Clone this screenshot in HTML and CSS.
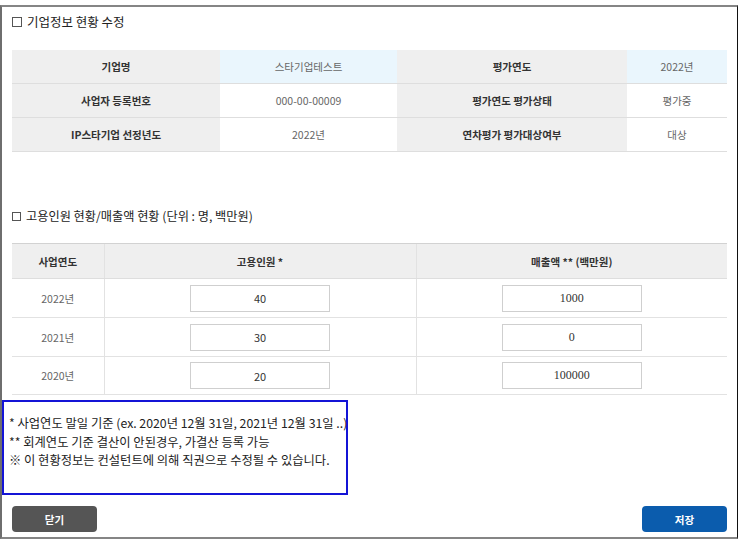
FILE: index.html
```html
<!DOCTYPE html>
<html>
<head>
    <title>기업정보 현황 수정</title>
    <link rel="stylesheet" href="styles.css">
</head>
<body>
    <div id="popup">
        <div class="sec-title first"><span class="chk"></span>기업정보 현황 수정</div>
        <table class="info">
            <colgroup>
                <col style="width:208px">
                <col style="width:177px">
                <col style="width:230px">
                <col style="width:100px">
            </colgroup>
            <tr class="hl">
                <th>기업명</th>
                <td>스타기업테스트</td>
                <th>평가연도</th>
                <td>2022년</td>
            </tr>
            <tr>
                <th>사업자 등록번호</th>
                <td>000-00-00009</td>
                <th>평가연도 평가상태</th>
                <td>평가중</td>
            </tr>
            <tr>
                <th>IP스타기업 선정년도</th>
                <td>2022년</td>
                <th>연차평가 평가대상여부</th>
                <td>대상</td>
            </tr>
        </table>

        <div class="sec-title second"><span class="chk small"></span>고용인원 현황/매출액 현황 (단위 : 명, 백만원)</div>
        <table class="stats">
            <colgroup>
                <col style="width:92px">
                <col style="width:312px">
                <col style="width:311px">
            </colgroup>
            <tr>
                <th>사업연도</th>
                <th>고용인원 *</th>
                <th>매출액 ** (백만원)</th>
            </tr>
            <tr>
                <td>2022년</td>
                <td><input class="num" type="text" value="40"></td>
                <td><input class="num serif" type="text" value="1000"></td>
            </tr>
            <tr>
                <td>2021년</td>
                <td><input class="num" type="text" value="30"></td>
                <td><input class="num serif" type="text" value="0"></td>
            </tr>
            <tr class="last">
                <td>2020년</td>
                <td><input class="num" type="text" value="20"></td>
                <td><input class="num serif" type="text" value="100000"></td>
            </tr>
        </table>

        <div id="notes">
            <p>* 사업연도 말일 기준 (ex. 2020년 12월 31일, 2021년 12월 31일 ..)</p>
            <p>** 회계연도 기준 결산이 안된경우, 가결산 등록 가능</p>
            <p>※ 이 현황정보는 컨설턴트에 의해 직권으로 수정될 수 있습니다.</p>
        </div>

        <div class="buttons">
            <button class="btn close">닫기</button>
            <button class="btn save">저장</button>
        </div>
    </div>
</body>
</html>
```

FILE: styles.css
```css
html, body{
    margin:0;
    padding:0;
    background:#fff;
}

body{
    font-family:"Noto Sans CJK KR", "Noto Sans", sans-serif;
    color:#333;
}

#popup{
    box-sizing:border-box;
    width:738px;
    height:534px;
    margin-top:5px;
    border-top:2px solid #858585;
    border-left:2px solid #6e6e6e;
    border-right:1px solid #111;
    border-bottom:2px solid #858585;
}

.sec-title{
    font-size:12.5px;
    line-height:16px;
    color:#222;
    padding-left:10px;
    display:flex;
    align-items:center;
}

.sec-title.first{
    padding-top:7px;
    margin-bottom:20px;
}

.sec-title.second{
    margin-top:56px;
    margin-bottom:19px;
    font-size:12.2px;
}

.chk{
    display:inline-block;
    box-sizing:border-box;
    width:10px;
    height:10px;
    border:1px solid #555;
    margin-right:5px;
}

.chk.small{
    width:9px;
    height:9px;
}

table{
    border-collapse:collapse;
    table-layout:fixed;
    width:715px;
    margin-left:10px;
    font-size:10.5px;
}

.info th, .info td{
    height:33px;
    padding:0;
    text-align:center;
    border-bottom:1px solid #dedede;
}

.info th{
    background:#efefef;
    font-weight:bold;
    color:#333;
}

.info td{
    color:#666;
}

.info tr.hl td{
    background:#eaf6fd;
}

.stats th{
    height:34px;
    padding:0;
    background:#efefef;
    border-top:1px solid #d2d2d2;
    border-bottom:1px solid #dedede;
    font-weight:bold;
    color:#333;
}

.stats td{
    height:38px;
    padding:0;
    text-align:center;
    color:#666;
    border-bottom:1px solid #e2e2e2;
}

.stats tr.last td{
    height:37px;
}

.stats th + th, .stats td + td{
    border-left:1px solid #e2e2e2;
}

.num{
    box-sizing:border-box;
    width:140px;
    height:27px;
    border:1px solid #cfcfcf;
    text-align:center;
    font-family:"Noto Sans CJK KR", sans-serif;
    font-size:11px;
    color:#333;
    outline:none;
}

.num.serif{
    font-family:"Liberation Serif", serif;
    font-size:12px;
}

#notes{
    box-sizing:border-box;
    width:346px;
    height:95px;
    margin-top:5px;
    border:2px solid #1414d6;
    padding:12px 0 0 5px;
}

#notes p{
    margin:0;
    font-size:12.3px;
    line-height:18.5px;
    color:#222;
    white-space:nowrap;
}

.buttons{
    display:flex;
    justify-content:space-between;
    padding:0 10px;
    margin-top:11px;
}

.btn{
    width:85px;
    height:26px;
    border:none;
    border-radius:4px;
    color:#fff;
    font-family:"Noto Sans CJK KR", sans-serif;
    font-size:10.5px;
    font-weight:bold;
    padding:0;
}

.close{
    background:#555;
}

.save{
    background:#0b5cad;
}
```
